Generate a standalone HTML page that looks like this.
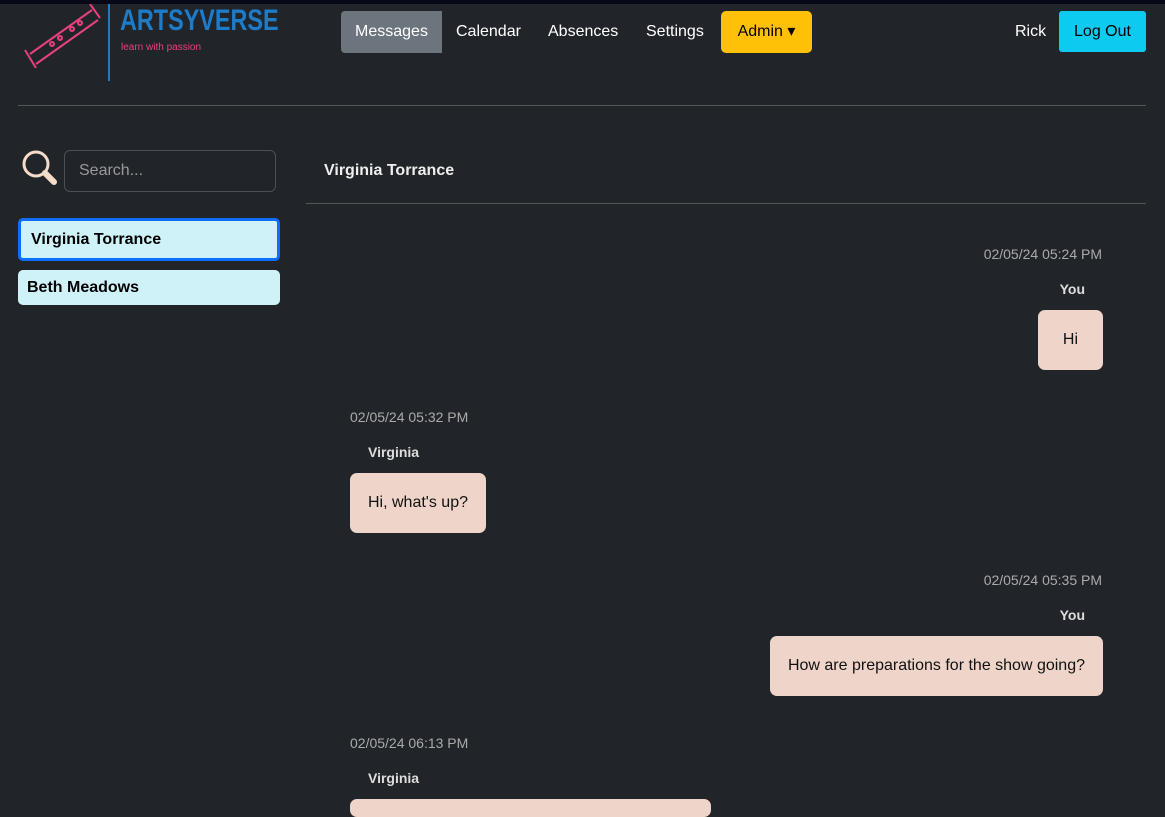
<!DOCTYPE html>
<html style="overflow:hidden;height:817px"><head><style>
body{margin:0;width:1165px;height:817px;overflow:hidden;background:#212529;font-family:"Liberation Sans",sans-serif;color:#fff;position:relative}
.a{position:absolute}
.top{left:0;top:0;width:1165px;height:4px;background:#060a18}
.nav{font-size:16px;top:11px;height:42px;line-height:42px}
.bub{background:#efd5c9;color:#111;border-radius:7px;font-size:16px;height:60px;line-height:60px;padding:0 18px}
.ts{font-size:14px;color:#aaa}
.nm{font-size:14px;font-weight:bold;color:#ddd}
</style></head><body>
<div class="a top"></div>
<svg class="a" style="left:22px;top:4px" width="80" height="64" viewBox="0 0 80 64"><g fill="none" stroke="#e8407f" stroke-width="2"><path d="M3 46 L14 64"/><path d="M8 50 L70 6 M14 60 L76 16 M68 0 L78 14"/><circle cx="30" cy="40" r="2"/><circle cx="38" cy="34" r="2"/><circle cx="50" cy="25" r="2"/><circle cx="58" cy="19" r="2"/></g></svg>
<div class="a" style="left:108px;top:4px;width:2px;height:77px;background:#1e7bc8"></div>
<div class="a" style="left:120px;top:4px;font-size:30px;color:#1e7bc8;transform:scaleX(0.78);transform-origin:left;font-weight:bold">ARTSYVERSE</div>
<div class="a" style="left:121px;top:42px;font-size:10px;color:#e8407f">learn with passion</div>
<div class="a nav" style="left:341px;width:101px;background:#6c757d;border-radius:4px 0 0 4px;text-align:center">Messages</div>
<div class="a nav" style="left:456px">Calendar</div>
<div class="a nav" style="left:548px">Absences</div>
<div class="a nav" style="left:646px">Settings</div>
<div class="a nav" style="left:721px;width:91px;background:#ffc107;color:#000;border-radius:5px;text-align:center">Admin ▾</div>
<div class="a nav" style="left:1015px">Rick</div>
<div class="a nav" style="left:1059px;width:87px;background:#0dcaf0;color:#000;border-radius:3px;text-align:center;height:41px">Log Out</div>
<div class="a" style="left:18px;top:105px;width:1128px;height:1px;background:#555"></div>
<svg class="a" style="left:20px;top:148px" width="40" height="40" viewBox="0 0 40 40"><circle cx="16" cy="16" r="12" fill="none" stroke="#f5dcc8" stroke-width="3"/><path d="M25 25 L34 34" stroke="#f5dcc8" stroke-width="6" stroke-linecap="round"/></svg>
<div class="a" style="left:64px;top:150px;border:1px solid #495057;border-radius:6px;font-size:16px;color:#999;line-height:40px;padding-left:14px;box-sizing:border-box;width:212px;height:42px">Search...</div>
<div class="a" style="left:18px;top:218px;width:262px;height:43px;box-sizing:border-box;border:3px solid #0d6efd;border-radius:5px;background:#cff1f8;color:#000;font-weight:bold;font-size:16px;line-height:37px;padding-left:10px">Virginia Torrance</div>
<div class="a" style="left:18px;top:270px;width:262px;height:35px;border-radius:5px;background:#cff1f8;color:#000;font-weight:bold;font-size:16px;line-height:35px;padding-left:9px;box-sizing:border-box">Beth Meadows</div>
<div class="a" style="left:324px;top:162px;font-weight:bold;font-size:16px;color:#eee">Virginia Torrance</div>
<div class="a" style="left:306px;top:203px;width:840px;height:1px;background:#555"></div>
<div class="a ts" style="right:63px;top:246px">02/05/24 05:24 PM</div>
<div class="a nm" style="right:80px;top:281px">You</div>
<div class="a bub" style="right:62px;top:310px;padding:0 25px">Hi</div>
<div class="a ts" style="left:350px;top:409px">02/05/24 05:32 PM</div>
<div class="a nm" style="left:368px;top:444px">Virginia</div>
<div class="a bub" style="left:350px;top:473px">Hi, what's up?</div>
<div class="a ts" style="right:63px;top:572px">02/05/24 05:35 PM</div>
<div class="a nm" style="right:80px;top:607px">You</div>
<div class="a bub" style="right:62px;top:636px">How are preparations for the show going?</div>
<div class="a ts" style="left:350px;top:735px">02/05/24 06:13 PM</div>
<div class="a nm" style="left:368px;top:770px">Virginia</div>
<div class="a bub" style="left:350px;top:799px;width:325px;height:18px"></div>
</body></html>
